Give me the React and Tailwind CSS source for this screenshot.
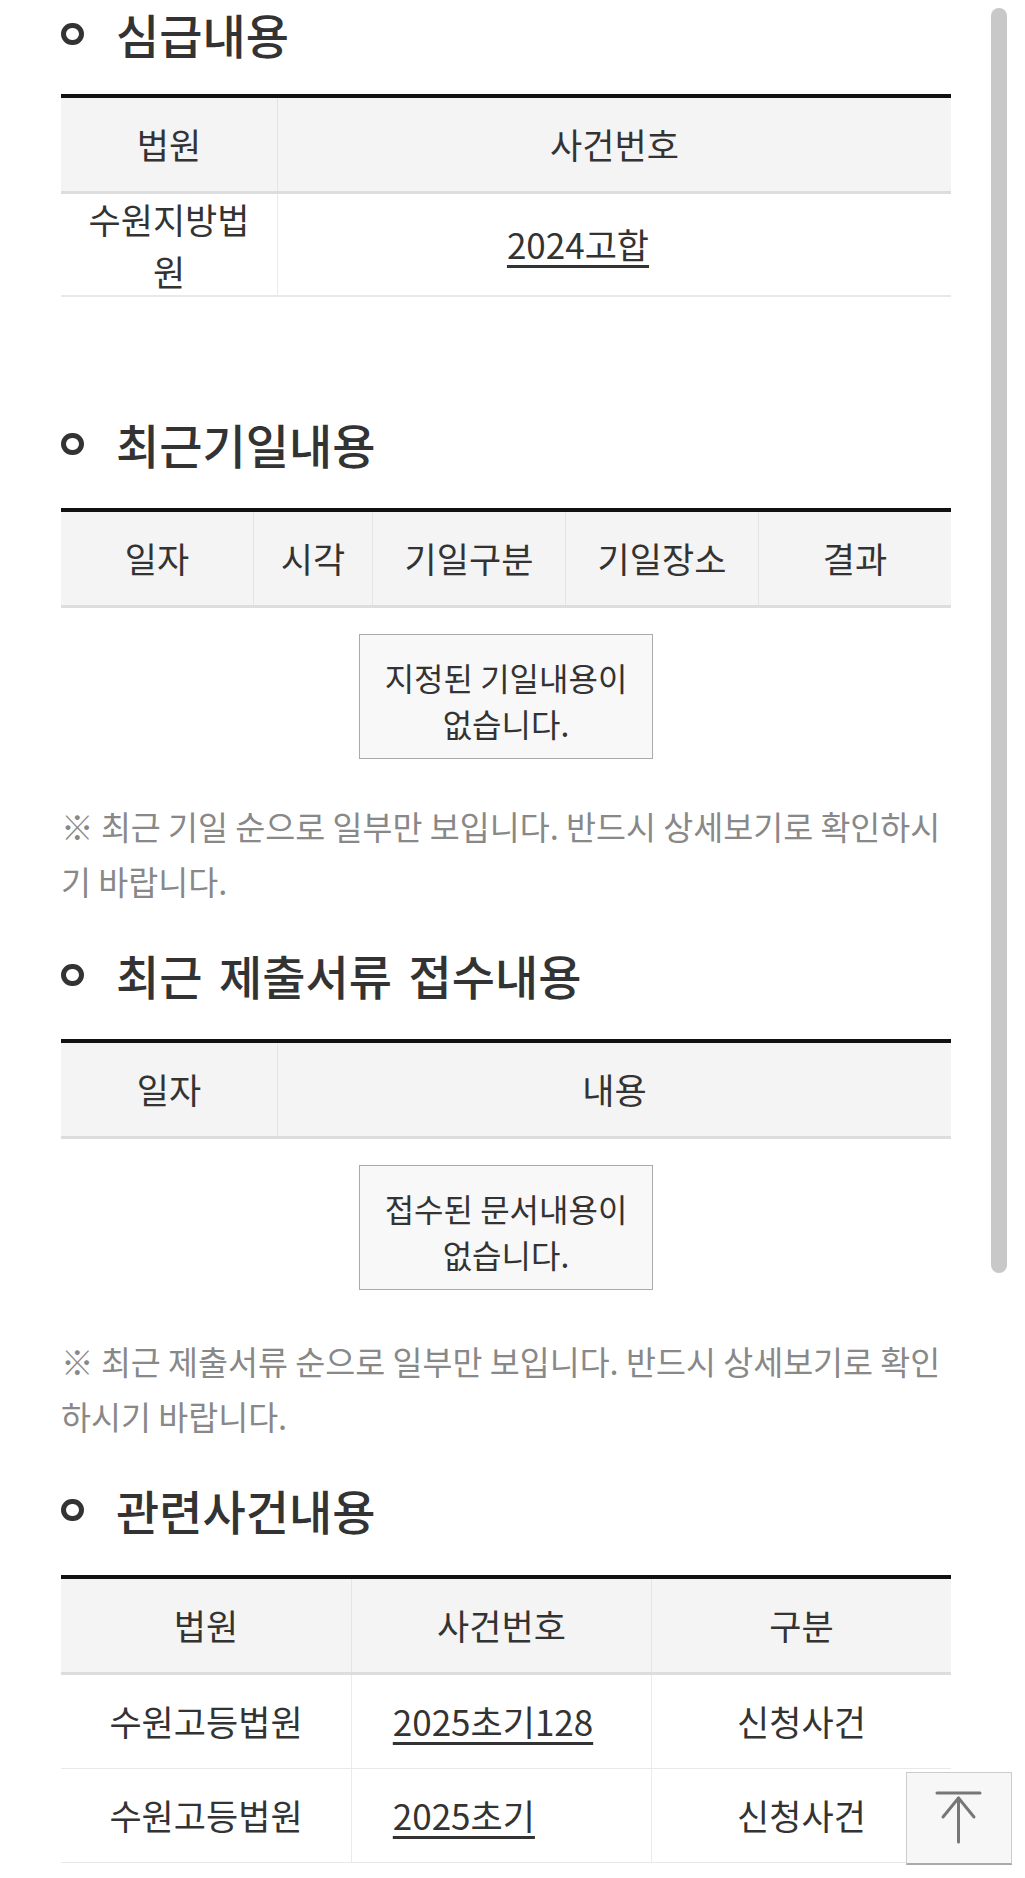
import React from "react";

function Heading({ children, className = "" }) {
  return (
    <div className={`flex items-center h-[64px] ${className}`}>
      <span className="w-[23px] h-[22px] rounded-full border-[5px] border-[#333] shrink-0" />
      <h2 className="ml-[32px] text-[47px] leading-[64px] font-medium text-[#333] [word-spacing:6px]">
        {children}
      </h2>
    </div>
  );
}

function HeadRow({ cols, widths }) {
  return (
    <div className="flex h-[96px] bg-[#f4f4f4] border-b-[3px] border-[#dddddd]">
      {cols.map((c, i) => (
        <div
          key={c}
          style={{ width: widths[i] }}
          className={`flex items-center justify-center text-[35px] ${
            i < cols.length - 1 ? "border-r border-[#e4e4e4]" : ""
          }`}
        >
          {c}
        </div>
      ))}
    </div>
  );
}

function EmptyBox({ lines }) {
  return (
    <div className="flex justify-center">
      <div className="w-[294px] border border-[#aaaaaa] bg-[#f8f8f8] px-[16px] pt-[19px] pb-[12px] text-center text-[32px] leading-[46px] text-[#333]">
        {lines}
      </div>
    </div>
  );
}

function Note({ children, className = "" }) {
  return <p className={`text-[32.6px] leading-[55px] text-[#888] ${className}`}>{children}</p>;
}

export default function App() {
  return (
    <div className="relative w-[1025px] min-h-[1878px] bg-white text-[#333] font-['Noto_Sans_CJK_KR','Noto_Sans',sans-serif] overflow-hidden">
      <div className="pl-[61px] pr-[74px] pt-[2px]">
        {/* 심급내용 */}
        <Heading>심급내용</Heading>
        <div className="mt-[28px] border-t-4 border-[#111]">
          <HeadRow cols={["법원", "사건번호"]} widths={["217px", "673px"]} />
          <div className="flex h-[103px] border-b-2 border-[#e8e8e8]">
            <div className="w-[217px] px-[17px] flex items-center justify-center text-center text-[35px] leading-[52px] border-r border-[#eaeaea]">
              수원지방법원
            </div>
            <div className="flex-1 flex items-center justify-center text-[35px]">
              <a className="underline decoration-[3px] underline-offset-[6px] text-[#333]">2024고합</a>
              <span className="inline-block w-[73px]" />
            </div>
          </div>
        </div>

        {/* 최근기일내용 */}
        <Heading className="mt-[115px]">최근기일내용</Heading>
        <div className="mt-[32px] border-t-4 border-[#111]">
          <HeadRow
            cols={["일자", "시각", "기일구분", "기일장소", "결과"]}
            widths={["193px", "119px", "193px", "193px", "192px"]}
          />
          <div className="pt-[26px]">
            <EmptyBox lines="지정된 기일내용이 없습니다." />
          </div>
        </div>
        <Note className="mt-[39px]">
          ※ 최근 기일 순으로 일부만 보입니다. 반드시 상세보기로 확인하시기 바랍니다.
        </Note>

        {/* 최근 제출서류 접수내용 */}
        <Heading className="mt-[35px]">최근 제출서류 접수내용</Heading>
        <div className="mt-[32px] border-t-4 border-[#111]">
          <HeadRow cols={["일자", "내용"]} widths={["217px", "673px"]} />
          <div className="pt-[26px]">
            <EmptyBox lines="접수된 문서내용이 없습니다." />
          </div>
        </div>
        <Note className="mt-[43px]">
          ※ 최근 제출서류 순으로 일부만 보입니다. 반드시 상세보기로 확인하시기 바랍니다.
        </Note>

        {/* 관련사건내용 */}
        <Heading className="mt-[35px]">관련사건내용</Heading>
        <div className="mt-[33px] border-t-4 border-[#111]">
          <HeadRow cols={["법원", "사건번호", "구분"]} widths={["291px", "300px", "299px"]} />
          {[
            { no: "2025초기128", hidden: "" },
            { no: "2025초기", hidden: "128" },
          ].map((r, i) => (
            <div key={i} className="flex h-[94px] border-b border-[#e8e8e8] text-[35px]">
              <div className="w-[291px] flex items-center justify-center border-r border-[#eaeaea]">
                수원고등법원
              </div>
              <div className="w-[300px] flex items-center justify-center border-r border-[#eaeaea]">
                <a className="underline decoration-[3px] underline-offset-[6px] text-[#333]">{r.no}</a>
                {r.hidden && <span className="invisible">{r.hidden}</span>}
                <span className="inline-block w-[17px]" />
              </div>
              <div className="w-[299px] flex items-center justify-center">신청사건</div>
            </div>
          ))}
        </div>
      </div>

      {/* overlay scrollbar */}
      <div className="absolute left-[991px] top-[8px] w-[16px] h-[1265px] rounded-full bg-[#c8c8c8]" />

      {/* back to top */}
      <button className="absolute left-[906px] top-[1772px] w-[106px] h-[93px] bg-[#f7f7f7] border border-[#cccccc] border-b-2 border-b-[#aaaaaa] flex items-center justify-center">
        <svg width="106" height="93" viewBox="0 0 106 93" className="absolute left-[-1px] top-[-1px]">
          <g stroke="#777" strokeWidth="3" fill="none" strokeLinecap="round" strokeLinejoin="round">
            <line x1="31" y1="21" x2="74" y2="21" />
            <line x1="52.5" y1="26" x2="52.5" y2="70" />
            <polyline points="37,45 52.5,26 68,45" />
          </g>
        </svg>
      </button>
    </div>
  );
}
